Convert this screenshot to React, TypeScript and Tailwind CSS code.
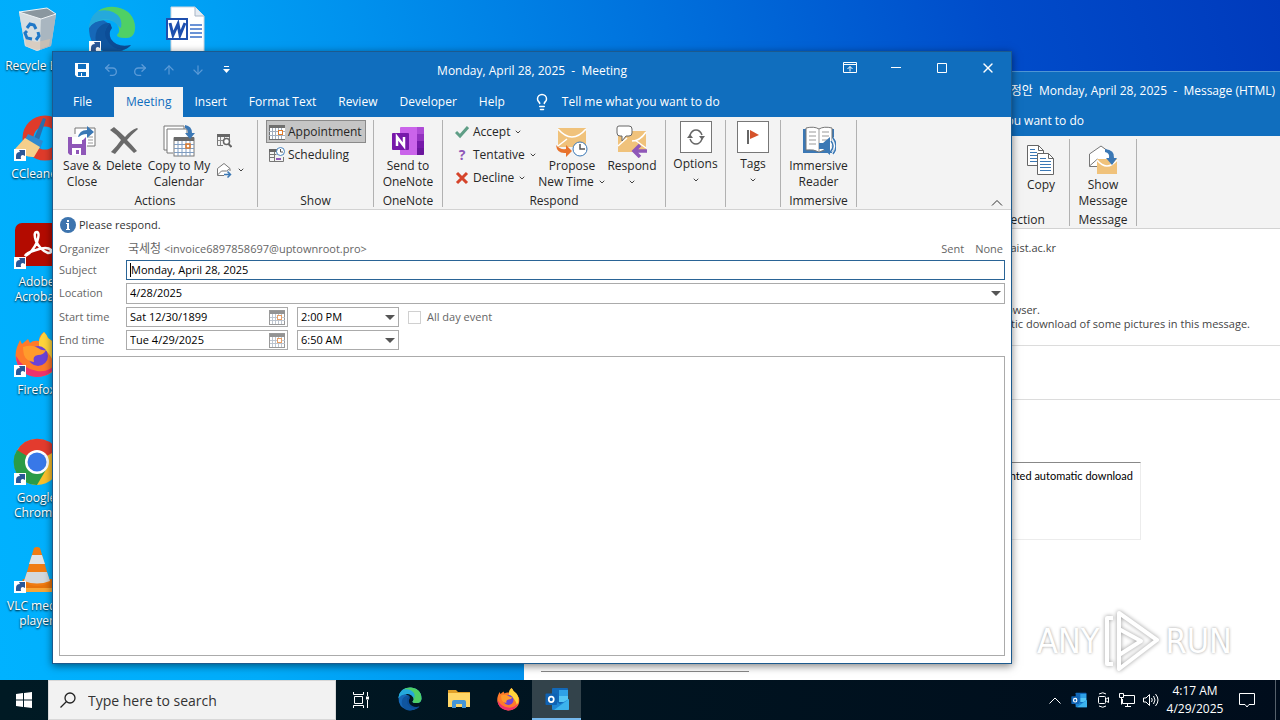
import React from 'react';
import { ChevronDown, Undo2, Redo2, ArrowUp, ArrowDown, X, Lightbulb } from 'lucide-react';

const ShortcutArrow = () => (
  <g>
    <rect x="1" y="35" width="12" height="12" fill="#fff" />
    <path d="M3 45v-3q0-4 4-4l-1-2h6v6l-2-1q-3 0-2 4z" fill="#2b5797" />
  </g>
);

const EdgeArt = () => (
  <g>
    <path d="M1 20Q0 42 20 46q14 2 23-7l-6 2q-12 2-17-8-3-9 3-14L12 12z" fill="#1668b8" />
    <path d="M1 22Q3 2 24 1q15 0 21 12 3 6 2 11-1 8-9 8-9 0-9-3 4-3 2-8-5-8-14-7Q4 15 1 22" fill="#27b4d8" />
    <path d="M10 5Q18 0 27 1q20 3 20 22-1 9-9 9-9 0-9-3 4-4 1-9Q26 9 10 5" fill="#4fd065" />
    <path d="M10 5Q25 2 32 12q2 4 1 10l-3-2q-4-8-15-7-9 2-14 9Q2 10 10 5" fill="#25a9dc" />
    <path d="M22 17q-7 7-5 16 4 10 17 11 6-1 9-5-14 3-20-6-3-6 1-11z" fill="#0c4d97" />
    <path d="M22 17q-7 7-4 15 5 11 17 12-10 5-20 1Q4 37 9 24q5-8 13-7" fill="#0f559f" />
  </g>
);

const FirefoxArt = () => (
  <g>
    <path d="M31 2q3 3 4 6 8 5 11 14 3 13-8 21-14 8-27-1Q-1 32 4 17l3-7 2 4 6-5 2 4q3-3 9-2 0-6 5-9" fill="#ff7a2a" />
    <path d="M31 2q3 3 4 6 8 5 10 14 1 8-3 14-4-14-16-20-1-8 5-14" fill="#ffd43c" />
    <path d="M3 26q1 19 20 21 16 0 22-15-9 11-21 9Q10 39 3 26" fill="#f0326d" />
    <circle cx="25" cy="26" r="10" fill="#6b43d8" />
    <path d="M10 17q9-3 15 1 4 3 8 2-2 5-8 5-6 1-4 7-8-1-10-7-1-5-1-8" fill="#ff9b2c" />
  </g>
);

const ExplorerArt = () => (
  <g>
    <path d="M2 6h16l4 4h24v8H2z" fill="#e0a029" />
    <path d="M2 12h44v28H2z" fill="#ffd667" />
    <path d="M10 42V30q0-4 4-4h20q4 0 4 4v12h-8v-8H18v8z" fill="#4696d6" />
  </g>
);

const OutlookArt = () => (
  <g>
    <rect x="14" y="2" width="32" height="38" rx="2" fill="#1268b8" />
    <rect x="28" y="6" width="18" height="12" fill="#2fa1e6" />
    <rect x="28" y="18" width="18" height="12" fill="#54c6f4" />
    <path d="M14 24l16 10 18-10v20q0 2-2 2H16q-2 0-2-2z" fill="#1d86d4" />
    <path d="M48 24v20q0 2-2 2H18z" fill="#3cb3ec" />
    <rect x="1" y="13" width="23" height="23" rx="2" fill="#0f62b3" />
    <ellipse cx="12.500" cy="24.500" rx="5" ry="5.500" fill="none" stroke="#fff" strokeWidth="3.500" />
  </g>
);

const RecycleArt = () => (
  <g>
    <path d="M6 6l6 34 12 5 14-5 5-32z" fill="#c3ced5" />
    <path d="M6 6l22 7-1 31-3 1-12-5z" fill="#d5dde1" />
    <path d="M28 13l15-5-5 32-11 4z" fill="#a9b6c0" />
    <path d="M6 6l28-4 9 6-15 5z" fill="#8a979f" stroke="#eef3f6" strokeWidth="1" />
    <path d="M12 33l12 3 13-3-1 7-12 4-11-4z" fill="#dcc3ac" opacity=".6" />
    <path d="M14 22l3-4 4 1 2 4M25 26l1 4-3 4M19 33l-5-1-2-5 2-2" fill="none" stroke="#1f78c8" strokeWidth="3" />
  </g>
);

const WordArt = () => (
  <g>
    <path d="M8 1h24l9 9v37H8z" fill="#fff" stroke="#cfd6df" />
    <path d="M32 1v9h9" fill="#e5ebf2" stroke="#a9b5c5" />
    <path d="M27 19h12M27 23h12M27 27h12M27 31h12" stroke="#3a70c9" strokeWidth="1.500" />
    <rect x="4" y="13" width="20" height="20" fill="#fff" stroke="#1e4fae" strokeWidth="2" />
    <path d="M7 17l3 12 5-11 2 11 5-12" fill="none" stroke="#1e4fae" strokeWidth="3" />
  </g>
);

const CCleanerArt = () => (
  <g>
    <circle cx="32" cy="24" r="17" fill="none" stroke="#df3b2b" strokeWidth="11" />
    <path d="M30 4l3 1-7 21-5-2z" fill="#2a6fad" />
    <path d="M15 20l15 7-3 8-16-8z" fill="#2f8ad0" />
    <path d="M12 24l15 9-6 10q-9 1-19-8z" fill="#f5cf8b" />
  </g>
);

const AcrobatArt = () => (
  <g>
    <rect x="2" y="1" width="44" height="43" rx="7" fill="#b30b00" />
    <path d="M12 34q7-3 12-14 3-9 0-10-4 0-1 9 4 9 12 12 4 0 3-3-4-4-15 0-10 3-11 6" fill="none" stroke="#fff" strokeWidth="2.500" />
  </g>
);

const ChromeArt = () => (
  <g>
    <circle cx="24" cy="24" r="23" fill="#fbc02d" />
    <path d="M24 24L4 13a23 23 0 0 1 40-1z" fill="#e33b2e" />
    <path d="M24 24L4 12a23 23 0 0 0 20 35l10-17z" fill="#2a9b47" />
    <circle cx="24" cy="24" r="12" fill="#fff" />
    <circle cx="24" cy="24" r="9.500" fill="#3878e8" />
  </g>
);

const VlcArt = () => (
  <g>
    <path d="M10 33h30l4 13H6z" fill="#e8740c" />
    <path d="M8 42h34v4H8z" fill="#f9a636" />
    <path d="M21 2q3-2 6 0l10 34q-13 8-26 0z" fill="#f07c12" />
    <path d="M19 9h10l3 9H16z" fill="#dfe3e6" />
    <path d="M14 26h20l3 9q-13 5-26 0z" fill="#d3d8dc" />
  </g>
);

interface DesktopIconProps {
  label: string;
  art: React.ReactNode;
  shortcut?: boolean;
}

const DesktopIcon: React.FC<DesktopIconProps> = ({ label, art, shortcut = true }) => (
  <button className="h-[108px] w-[75px] pt-1.5 flex flex-col items-center text-white text-xs leading-[15px]">
    <svg viewBox="0 0 48 48" className="w-12 h-12 shrink-0">
      {art}
      {shortcut && <ShortcutArrow />}
    </svg>
    <span className="w-[66px] mt-1 text-center [text-shadow:0_1px_2px_#000]">{label}</span>
  </button>
);

const desktopColumns = [
  [
    { label: 'Recycle Bin', art: <RecycleArt />, shortcut: false },
    { label: 'CCleaner', art: <CCleanerArt /> },
    { label: 'Adobe Acrobat', art: <AcrobatArt /> },
    { label: 'Firefox', art: <FirefoxArt /> },
    { label: 'Google Chrome', art: <ChromeArt /> },
    { label: 'VLC media player', art: <VlcArt /> },
  ],
  [{ label: '', art: <EdgeArt /> }],
  [{ label: '', art: <WordArt />, shortcut: false }],
];

const SaveCloseIcon = () => (
  <svg viewBox="0 0 32 32" className="w-8 h-8" fill="none">
    <path d="M9 9V3h20v18h-8" fill="#fff" stroke="#777" />
    <path d="M22 12h5M22 15h5M22 18h5" stroke="#999" />
    <path d="M12 13q1-8 9-8V1l7 6-7 6V9q-6 0-9 4" fill="#3b78b5" />
    <path d="M2 12h9v3h6l3-3v18H4l-2-2z" fill="#8f57b8" />
    <path d="M6 12h10v7H6z" fill="#fff" />
    <path d="M6 23h9v7H6z" fill="#fff" />
    <path d="M10 25h3v4h-3z" fill="#8f57b8" />
  </svg>
);

const DeleteIcon = () => (
  <svg viewBox="0 0 32 32" className="w-8 h-8">
    <path d="M2 5l4-3q6 5 11 10Q23 5 29 3l1 1q-7 6-11 11 5 5 10 11l-3 2q-5-5-10-10-4 5-9 11l-4-2q6-6 10-12-5-6-11-10" fill="#6a6a6a" />
  </svg>
);

const CalendarGrid: React.FC<{ className: string }> = ({ className }) => (
  <svg viewBox="0 0 16 16" className={className} shapeRendering="crispEdges">
    <rect x="0" y="1" width="16" height="14" fill="#fff" stroke="#6f6f6f" />
    <rect x="0" y="1" width="16" height="3" fill="#6f6f6f" />
    <path d="M3.500 4v11M6.500 4v11M9.500 4v11M12.500 4v11M0 7.500h16M0 11.500h16" stroke="#a3aebd" />
    <rect x="9" y="6" width="4" height="4" fill="#fff" stroke="#e07a2a" />
  </svg>
);

const CopyCalendarIcon = () => (
  <svg viewBox="0 0 32 32" className="w-8 h-8" fill="none">
    <path d="M5 25H1V1h20v3" fill="#fff" stroke="#777" />
    <path d="M10 28H4V4h20v6" fill="#fff" stroke="#777" />
    <rect x="11" y="13" width="20" height="18" fill="#fff" stroke="#777" />
    <rect x="11" y="12" width="20" height="4" fill="#6a6a6a" />
    <path d="M15 16v15M19 16v15M23 16v15M27 16v15M11 19.500h20M11 23.500h20M11 27.500h20" stroke="#7f9cc0" />
    <path d="M23 19h4v4h-4z" stroke="#e07a2a" strokeWidth="1.500" />
    <path d="M22 0q7 1 7 8h3l-5 6-5-6h3q0-4-3-5z" fill="#3b78b5" />
  </svg>
);

const CalendarSearchIcon = () => (
  <svg viewBox="0 0 16 16" className="w-4 h-4" fill="none">
    <path d="M7 13.500H1.500v-11h12V8" stroke="#777" />
    <path d="M1 2h13v3H1z" fill="#666" />
    <path d="M4.500 5v8M8.500 5v3M2 8.500h5" stroke="#888" />
    <circle cx="10.500" cy="9.500" r="3" fill="#fff" stroke="#666" strokeWidth="1.500" />
    <path d="M12.500 12l3 3" stroke="#666" strokeWidth="2" />
  </svg>
);

const ForwardIcon = () => (
  <svg viewBox="0 0 16 16" className="w-4 h-4" fill="none">
    <path d="M8 13.500H1.500v-7L8 1.500l6 5V9" fill="#fff" stroke="#777" />
    <path d="M1.500 13l4-4h5l3-2" stroke="#777" />
    <path d="M8 12.500h6M11.500 9.500l3 3-3 3" stroke="#3b78b5" strokeWidth="1.500" />
  </svg>
);

const SchedulingIcon = () => (
  <svg viewBox="0 0 16 16" className="w-4 h-4" fill="none">
    <path d="M.5 2.500h8M.5 2v12.500h14V10M5.500 4v10M.5 7.500h7M.5 10.500h5" stroke="#777" />
    <path d="M0 2h8v3H0z" fill="#666" />
    <path d="M7 12h5" stroke="#8f57b8" strokeWidth="2" />
    <circle cx="11.500" cy="4.500" r="4" fill="#fff" stroke="#4682bd" />
    <path d="M11.500 2v3H14" stroke="#555" />
  </svg>
);

const OneNoteIcon = () => (
  <svg viewBox="0 0 32 32" className="w-8 h-8">
    <rect x="8" y="2" width="24" height="28" rx="1" fill="#ca64ea" />
    <path d="M25 2h6q1 0 1 1v6h-7z" fill="#ae4bd5" />
    <path d="M25 9h7v7h-7z" fill="#9332bf" />
    <path d="M25 16h7v7h-7z" fill="#7719aa" />
    <path d="M25 23h7v6q0 1-1 1h-6z" fill="#6a169c" />
    <rect x="0" y="8" width="17" height="17" rx="1" fill="#7719aa" />
    <path d="M5 21v-9l7 9v-9" fill="none" stroke="#fff" strokeWidth="2.500" />
  </svg>
);

const ProposeIcon = () => (
  <svg viewBox="0 0 34 32" className="w-[34px] h-8" fill="none">
    <path d="M3 3h28v19H3z" fill="#f0c27b" />
    <path d="M3 4q14 16 28 0M3 21l9-7" stroke="#fff" strokeWidth="1.500" />
    <path d="M1 20q4 5 10 4v-4l6 6-6 6v-4Q2 29 1 20" fill="#e8722c" />
    <circle cx="25" cy="24" r="7" fill="#fff" stroke="#3b78b5" />
    <path d="M25 19v5h5" stroke="#555" strokeWidth="1.500" />
  </svg>
);

const RespondIcon = () => (
  <svg viewBox="0 0 34 34" className="w-[34px] h-[34px]" fill="none">
    <path d="M3 7h28v21H3z" fill="#f0c27b" />
    <path d="M3 22L12 14M31 8q-6 9-14 9M20 16l11 8" stroke="#fff" strokeWidth="1.500" />
    <path d="M4 2h10q3 0 3 3v4q0 3-3 3h-3l-4 5v-5H5q-3 0-3-3V4q0-2 2-2" fill="#fff" stroke="#666" />
    <path d="M32 27H20M25 21l-6 6 6 6" stroke="#8f57b8" strokeWidth="3.500" />
  </svg>
);

const OptionsIcon = () => (
  <svg viewBox="0 0 20 20" className="w-5 h-5" fill="none">
    <path d="M4 8q2-5 6-5 4 0 6 5M16 12q-2 5-6 5-4 0-6-5" stroke="#666" strokeWidth="1.500" />
    <path d="M1 11l3-4 3 4zM13 9l3 4 3-4z" fill="#666" />
  </svg>
);

const FlagIcon = () => (
  <svg viewBox="0 0 20 20" className="w-5 h-5">
    <path d="M4 3h2v14H4z" fill="#666" />
    <path d="M7 3l9 5-9 4z" fill="#d5522a" />
  </svg>
);

const ReaderIcon = () => (
  <svg viewBox="0 0 34 30" className="w-[34px] h-[30px]" fill="none">
    <path d="M1 3h31v24H1z" fill="#3b78b5" />
    <path d="M4 2q8-2 13 1 5-3 13-1v22q-8-1-13 2-5-3-13-2z" fill="#fff" stroke="#777" />
    <path d="M17 3v22M7 6h7M7 10h7M7 14h7M7 18h7M20 6h7M20 10h7M20 14h5" stroke="#999" />
    <path d="M17 17h4l7-6v18l-7-6h-4z" fill="#3b78b5" />
    <path d="M29 15q4 5 0 10M31 12q6 8 0 16" stroke="#fff" strokeWidth="3" />
    <path d="M29 15q4 5 0 10M31 12q6 8 0 16" stroke="#3b78b5" strokeWidth="1.500" />
  </svg>
);

const CopyPagesIcon = () => (
  <svg viewBox="0 0 30 32" className="w-[30px] h-8" fill="none">
    <path d="M1.500 1.500h11l5 5v15h-16z" fill="#fff" stroke="#666" />
    <path d="M4 5.500h5M4 8.500h7M4 11.500h7M4 14.500h7M4 17.500h7" stroke="#3b78b5" />
    <path d="M11.500 9.500h11l5 5v16h-16z" fill="#fff" stroke="#666" />
    <path d="M12.500 1.500v5h5M22.500 9.500v5h5" stroke="#666" />
    <path d="M14 14.500h6M14 17.500h11M14 20.500h11M14 23.500h11M14 26.500h11" stroke="#3b78b5" />
  </svg>
);

const ShowMessageIcon = () => (
  <svg viewBox="0 0 30 32" className="w-[30px] h-8" fill="none">
    <path d="M9 22.500H1.500V10L13 2l11 8v6" fill="#fff" stroke="#777" />
    <path d="M1.500 22l8-7" stroke="#777" />
    <path d="M9 15h20v15H9z" fill="#f0c27b" />
    <path d="M9 16q10 12 20 0" stroke="#fff" strokeWidth="1.500" />
    <path d="M17 5q10 1 9 9h3l-5 7-6-7h3q1-5-4-6z" fill="#3b78b5" />
  </svg>
);

const MenuArrow = () => <ChevronDown className="w-2 h-2 text-[#444]" strokeWidth={3} />;

interface BigButtonProps {
  icon: React.ReactNode;
  lines: string[];
  className?: string;
  menu?: boolean;
}

const BigButton: React.FC<BigButtonProps> = ({ icon, lines, className = '', menu }) => (
  <button className={`flex flex-col items-center pt-[3px] leading-4 whitespace-nowrap ${className}`}>
    <span className="h-[35px] flex items-center">{icon}</span>
    {lines.map((line, i) => (
      <span key={line} className="flex items-center gap-1">
        {line}
        {menu && i === 1 && <MenuArrow />}
      </span>
    ))}
    {menu && lines.length === 1 && <span className="mt-1"><MenuArrow /></span>}
  </button>
);

const BoxedButton: React.FC<{ icon: React.ReactNode; label: string }> = ({ icon, label }) => (
  <button className="flex-1 flex flex-col items-center pt-px leading-4">
    <span className="w-8 h-8 bg-white border border-[#777] flex items-center justify-center">{icon}</span>
    <span className="mt-[3px] mb-1">{label}</span>
    <MenuArrow />
  </button>
);

interface RibbonGroupProps {
  label?: string;
  className: string;
  children: React.ReactNode;
}

const RibbonGroup: React.FC<RibbonGroupProps> = ({ label, className, children }) => (
  <div className={`h-[87px] shrink-0 border-r border-[#b1b1b1] flex flex-col ${className}`}>
    <div className="flex-1 flex min-h-0">{children}</div>
    {label && <div className="h-3 leading-3 text-center">{label}</div>}
  </div>
);

const SmallButton: React.FC<{ icon: React.ReactNode; label: string }> = ({ icon, label }) => (
  <button className="h-[23px] flex items-center gap-1 whitespace-nowrap">
    <span className="w-[14px] flex justify-center">{icon}</span>
    <span>{label}</span>
    <MenuArrow />
  </button>
);

const tabs = ['Insert', 'Format Text', 'Review', 'Developer', 'Help'];

const TitleBar = () => (
  <div className="h-[35px] flex items-start">
    <div className="flex-1">
      <div className="h-[35px] pl-[14px] flex items-center text-[#5b9bd8]">
        <button aria-label="Save" className="w-[29px] flex justify-center">
          <svg viewBox="0 0 14 14" className="w-[14px] h-[14px]">
            <path d="M0 0h14v14H2l-2-2z" fill="#fff" />
            <path d="M3 1h8v5H3zM3 9h8v4H7v-3H6v3H3z" fill="#106ebe" />
          </svg>
        </button>
        <button aria-label="Undo" className="w-[29px] flex justify-center"><Undo2 className="w-4 h-4" /></button>
        <button aria-label="Redo" className="w-[29px] flex justify-center"><Redo2 className="w-4 h-4" /></button>
        <button aria-label="Previous item" className="w-[29px] flex justify-center"><ArrowUp className="w-[14px] h-[14px]" /></button>
        <button aria-label="Next item" className="w-[29px] flex justify-center"><ArrowDown className="w-[14px] h-[14px]" /></button>
        <button aria-label="Customize toolbar" className="w-[29px] flex justify-center">
          <svg viewBox="0 0 7 7" className="w-[7px] h-[7px]"><path d="M1 0h5v1H1zM0 3h7L3.500 7z" fill="#fff" /></svg>
        </button>
      </div>
    </div>
    <h1 className="h-[35px] leading-[38px] whitespace-pre">{'Monday, April 28, 2025  -  Meeting'}</h1>
    <div className="flex-1 flex justify-end h-8 items-center">
      <button aria-label="Ribbon display options" className="w-[46px] flex justify-center">
        <svg viewBox="0 0 14 12" className="w-[14px] h-3" fill="none" stroke="#fff"><path d="M.5.500h13v10H.5zM.5 2.500h13M7 9.500V4.500M4.500 7L7 4.500 9.500 7" /></svg>
      </button>
      <button aria-label="Minimize" className="w-[46px] flex justify-center">
        <svg viewBox="0 0 10 10" className="w-[10px] h-[10px]"><path d="M0 4h10v1H0z" fill="#fff" /></svg>
      </button>
      <button aria-label="Maximize" className="w-[46px] flex justify-center">
        <svg viewBox="0 0 10 10" className="w-[10px] h-[10px]" fill="none" stroke="#fff"><path d="M.5.500h9v9h-9z" /></svg>
      </button>
      <button aria-label="Close" className="w-[46px] flex justify-center"><X className="w-4 h-4" strokeWidth={2} /></button>
    </div>
  </div>
);

const TabRow = () => (
  <nav className="h-[30px] flex items-stretch">
    <button className="pl-5 pr-[22px]">File</button>
    <button className="px-3 bg-[#f3f3f3] text-[#106ebe]">Meeting</button>
    {tabs.map((tab) => (
      <button key={tab} className="px-[11px]">{tab}</button>
    ))}
    <button className="flex items-center pl-[17px] gap-[11px]">
      <Lightbulb className="w-[18px] h-[18px]" strokeWidth={2} />
      Tell me what you want to do
    </button>
  </nav>
);

const Ribbon = () => (
  <div className="h-[93px] pt-[3px] bg-[#f3f3f3] border-b border-[#d2d2d2] text-[#262626] flex">
    <RibbonGroup label="Actions" className="w-[205px]">
      <BigButton className="w-[42px] ml-2" icon={<SaveCloseIcon />} lines={['Save &', 'Close']} />
      <BigButton className="w-[42px]" icon={<DeleteIcon />} lines={['Delete']} />
      <BigButton className="w-[68px]" icon={<CopyCalendarIcon />} lines={['Copy to My', 'Calendar']} />
      <div className="flex flex-col pl-[3px] pt-3 gap-[14px]">
        <button aria-label="Calendar preview"><CalendarSearchIcon /></button>
        <button aria-label="Forward" className="flex items-center gap-[5px]">
          <ForwardIcon />
          <MenuArrow />
        </button>
      </div>
    </RibbonGroup>
    <RibbonGroup label="Show" className="w-[116px]">
      <div className="flex flex-col pl-2 w-[108px]">
        <button className="h-[23px] w-full border border-[#8a8a8a] bg-[#c5c5c5] flex items-center gap-[3px] pl-0.5">
          <CalendarGrid className="w-4 h-4" />
          Appointment
        </button>
        <button className="h-[23px] flex items-center gap-[3px] pl-[3px]">
          <SchedulingIcon />
          Scheduling
        </button>
      </div>
    </RibbonGroup>
    <RibbonGroup label="OneNote" className="w-[69px]">
      <BigButton className="w-full" icon={<OneNoteIcon />} lines={['Send to', 'OneNote']} />
    </RibbonGroup>
    <RibbonGroup label="Respond" className="w-[223px]">
      <div className="flex flex-col w-[94px] pl-3">
        <SmallButton
          label="Accept"
          icon={<svg viewBox="0 0 14 14" className="w-[14px] h-[14px]" fill="none"><path d="M1 7l4 4 8-9" stroke="#5f9e86" strokeWidth="3" /></svg>}
        />
        <SmallButton label="Tentative" icon={<span className="font-bold text-sm text-[#8f57b8]">?</span>} />
        <SmallButton
          label="Decline"
          icon={<svg viewBox="0 0 14 14" className="w-[14px] h-[14px]" fill="none"><path d="M2 2l10 10M12 2L2 12" stroke="#d5442a" strokeWidth="3" /></svg>}
        />
      </div>
      <BigButton className="w-[70px]" icon={<ProposeIcon />} lines={['Propose', 'New Time']} menu />
      <BigButton className="w-[50px]" icon={<RespondIcon />} lines={['Respond']} menu />
    </RibbonGroup>
    <RibbonGroup className="w-[60px]">
      <BoxedButton icon={<OptionsIcon />} label="Options" />
    </RibbonGroup>
    <RibbonGroup className="w-[55px]">
      <BoxedButton icon={<FlagIcon />} label="Tags" />
    </RibbonGroup>
    <RibbonGroup label="Immersive" className="w-[76px]">
      <BigButton className="w-full" icon={<ReaderIcon />} lines={['Immersive', 'Reader']} />
    </RibbonGroup>
    <button aria-label="Collapse ribbon" className="ml-auto mt-auto mr-2 mb-[3px]">
      <svg viewBox="0 0 12 6" className="w-3 h-1.5" fill="none" stroke="#333"><path d="M1 5.500l5-5 5 5" /></svg>
    </button>
  </div>
);

const DownTriangle = () => (
  <svg viewBox="0 0 10 5" className="w-[10px] h-[5px] shrink-0 pointer-events-none"><path d="M0 0h10L5 5z" fill="#555" /></svg>
);

interface TimeRowProps {
  id: string;
  label: string;
  date: string;
  time: string;
  children?: React.ReactNode;
}

const TimeRow: React.FC<TimeRowProps> = ({ id, label, date, time, children }) => (
  <div className="flex items-center h-5">
    <label htmlFor={id} className="w-[67px]">{label}</label>
    <div className="w-[162px] h-5 border border-[#ababab] flex items-center pl-[3px] pr-0.5">
      <input id={id} defaultValue={date} className="flex-1 min-w-0 text-black outline-none" />
      <button aria-label={`Pick ${label.toLowerCase()} date`}><CalendarGrid className="w-4 h-[15px] opacity-75" /></button>
    </div>
    <div className="w-[102px] h-5 ml-[9px] border border-[#ababab] flex items-center pl-[3px] pr-[3px]">
      <select aria-label={`${label} hour`} defaultValue={time} className="flex-1 appearance-none text-black outline-none">
        <option>{time}</option>
      </select>
      <DownTriangle />
    </div>
    {children}
  </div>
);

const MeetingForm = () => (
  <div className="flex-1 min-h-0 bg-white flex flex-col px-1.5 pb-[7px] text-[11px] text-[#666]">
    <div className="h-[30px] flex items-center gap-[3px] text-[#333]">
      <svg viewBox="0 0 16 16" className="w-4 h-4 ml-px">
        <circle cx="8" cy="8" r="8" fill="#3d74ae" />
        <path d="M7 3h2v2H7zM6 6h3v6h1v1H6v-1h1V7H6z" fill="#fff" />
      </svg>
      Please respond.
    </div>
    <div className="h-[18px] mb-0.5 flex items-center">
      <span className="w-[67px]">Organizer</span>
      <span className="pl-0.5 leading-4"><span className="text-xs">국세청</span> &lt;invoice6897858697@uptownroot.pro&gt;</span>
      <span className="ml-auto mr-[11px]">Sent</span>
      <span className="mr-0.5">None</span>
    </div>
    <div className="flex flex-col gap-[3px]">
      <div className="flex items-center h-5">
        <label htmlFor="subject" className="w-[67px]">Subject</label>
        <div className="flex-1 h-5 border border-[#2a6496] flex items-center pl-[3px]">
          <span className="w-px h-[14px] bg-black" />
          <input id="subject" defaultValue="Monday, April 28, 2025" className="flex-1 text-black outline-none" />
        </div>
      </div>
      <div className="flex items-center h-[21px]">
        <label htmlFor="location" className="w-[67px]">Location</label>
        <div className="flex-1 h-[21px] border border-[#ababab] flex items-center pl-[3px] pr-[3px]">
          <input id="location" defaultValue="4/28/2025" className="flex-1 text-black outline-none" />
          <button aria-label="Recent locations"><DownTriangle /></button>
        </div>
      </div>
      <TimeRow id="start" label="Start time" date="Sat 12/30/1899" time="2:00 PM">
        <label className="ml-[9px] flex items-center gap-1.5">
          <input type="checkbox" className="appearance-none w-[13px] h-[13px] border border-[#d0d0d0] bg-white" />
          All day event
        </label>
      </TimeRow>
      <TimeRow id="end" label="End time" date="Tue 4/29/2025" time="6:50 AM" />
    </div>
    <textarea aria-label="Meeting notes" className="flex-1 mt-1.5 border border-[#ababab] resize-none outline-none" />
  </div>
);

const MeetingWindow = () => (
  <section className="absolute left-[53px] right-[269px] top-[52px] bottom-[17px] flex flex-col bg-[#106ebe] text-white text-xs outline outline-[#1c5a8e] shadow-[0_2px_8px_1px_rgba(0,0,0,0.5)]">
    <TitleBar />
    <TabRow />
    <Ribbon />
    <MeetingForm />
  </section>
);

const MessageWindow = () => (
  <section className="absolute left-[524px] right-0 top-[71px] bottom-0 flex flex-col bg-white text-xs text-right overflow-hidden">
    <div className="bg-[#106ebe] border-t border-[#4f95d4] text-white">
      <div className="h-[35px] leading-[37px] pr-[5px] whitespace-pre">수정안  Monday, April 28, 2025  -  Message (HTML)</div>
      <div className="h-[29px] leading-[28px] pr-[196px]">Tell me what you want to do</div>
    </div>
    <div className="h-[93px] pt-[3px] bg-[#f3f3f3] border-b border-[#d2d2d2] text-[#262626] flex justify-end pr-[143px]">
      <RibbonGroup label="Selection" className="w-[100px]">
        <BigButton className="w-[44px]" icon={null} lines={['Select', 'All']} />
        <BigButton className="w-[54px]" icon={<CopyPagesIcon />} lines={['Copy']} />
      </RibbonGroup>
      <RibbonGroup label="Message" className="w-[67px]">
        <BigButton className="w-full" icon={<ShowMessageIcon />} lines={['Show', 'Message']} />
      </RibbonGroup>
    </div>
    <div className="h-[117px] border-b border-[#dcdcdc] text-[11px] leading-[14px] text-[#444] pt-3">
      <p className="pr-[224px]">kaist.ac.kr</p>
      <p className="pr-[240px] mt-12">view it in a web browser.</p>
      <p className="pr-[30px]">prevented automatic download of some pictures in this message.</p>
    </div>
    <div className="h-[54px] border-b border-[#dcdcdc]" />
    <div className="mt-[62px] ml-4 mr-[139px] h-[78px] pt-1.5 pr-[7px] border border-t-[#888] border-[#ececec] text-[11px] leading-[14px] text-black font-['Lato',sans-serif]">
      prevented automatic download
    </div>
    <div className="mt-auto mb-2 ml-[17px] w-[208px] border-t border-[#888]" />
  </section>
);

const Watermark = () => (
  <div className="absolute right-12 bottom-[7px] h-16 flex items-center gap-1 text-white font-['DejaVu_Sans_Condensed','Roboto',sans-serif] text-[34px] [text-shadow:0_0_3px_#999]">
    <span>ANY</span>
    <svg viewBox="0 0 58 64" className="w-[58px] h-16 drop-shadow-[0_0_2px_#999]" fill="none" stroke="#fff" strokeWidth="4" strokeLinejoin="round">
      <path d="M16 4l38 27-38 29z" />
      <path d="M10 9H4v46h6M16 20l22 12-22 14" />
    </svg>
    <span>RUN</span>
  </div>
);

const apps = [
  { name: 'Microsoft Edge', art: <EdgeArt />, active: false },
  { name: 'File Explorer', art: <ExplorerArt />, active: false },
  { name: 'Firefox', art: <FirefoxArt />, active: false },
  { name: 'Outlook', art: <OutlookArt />, active: true },
];

const Taskbar = () => (
  <footer className="h-10 flex items-stretch bg-gradient-to-r from-[#001a24] to-[#000d1c] text-white text-xs">
    <button aria-label="Start" className="w-12 flex items-center justify-center">
      <svg viewBox="0 0 16 16" className="w-4 h-4"><path d="M0 2l7-1v6.500H0zM8 1l8-1v7.500H8zM0 8.500h7V15l-7-1zM8 8.500h8V16l-8-1z" fill="#fff" /></svg>
    </button>
    <label className="w-[288px] bg-[#f2f2f2] border border-[#d8d8d8] flex items-center pl-[11px] gap-3 text-[#333]">
      <svg viewBox="0 0 16 16" className="w-4 h-4" fill="none" stroke="#222" strokeWidth="1.300"><circle cx="10" cy="6" r="5" /><path d="M6.500 9.500L.5 15.500" /></svg>
      <input type="text" aria-label="Search" placeholder="Type here to search" className="flex-1 min-w-0 pt-0.5 text-sm outline-none placeholder:text-[#333]" />
    </label>
    <button aria-label="Task view" className="w-[49px] flex items-center justify-center">
      <svg viewBox="0 0 16 16" className="w-4 h-4" fill="none" stroke="#fff"><path d="M.5 0v2.500h10V0M.5 16v-2.500h10V16M1.500 4.500h8v7h-8zM14.500 0v4M14.500 8v8" /><path d="M13 4.500h3v3h-3z" fill="#fff" stroke="none" /></svg>
    </button>
    {apps.map((app) => (
      <button
        key={app.name}
        aria-label={app.name}
        className={`w-[49px] flex items-center justify-center border-b-2 ${app.active ? 'bg-[#33434b] border-[#76b9ed]' : 'border-transparent'}`}
      >
        <svg viewBox="0 0 48 48" className="w-6 h-6">{app.art}</svg>
      </button>
    ))}
    <div className="ml-auto flex items-center">
      <button aria-label="Show hidden icons" className="w-6 flex justify-center">
        <svg viewBox="0 0 12 7" className="w-3 h-[7px]" fill="none" stroke="#fff"><path d="M.5 6.500L6 1l5.500 5.500" /></svg>
      </button>
      <button aria-label="Outlook" className="w-6 flex justify-center"><svg viewBox="0 0 48 48" className="w-4 h-4"><OutlookArt /></svg></button>
      <button aria-label="Meet now" className="w-6 flex justify-center">
        <svg viewBox="0 0 16 16" className="w-4 h-4" fill="none" stroke="#fff"><rect x="3.500" y="4.500" width="7" height="7" rx="1" /><path d="M10.500 7.500l3-2v5l-3-2M4 2q4-2.500 7 0M4 14q4 2.500 7 0" /></svg>
      </button>
      <button aria-label="Network" className="w-6 flex justify-center">
        <svg viewBox="0 0 16 16" className="w-4 h-4" fill="none" stroke="#fff"><path d="M5 3.500h10.500v8H3.500V7M8.500 11.500v3M6 14.500h6M.5 1.500h4v4h-4zM2.500 5.500v7" /></svg>
      </button>
      <button aria-label="Volume" className="w-6 flex justify-center">
        <svg viewBox="0 0 16 16" className="w-4 h-4" fill="none" stroke="#fff"><path d="M.5 6H3l3.500-3.500v11L3 10H.5zM8.500 6q1.500 2 0 4M10.500 4q3 4 0 8M12.500 2q5 6 0 12" /></svg>
      </button>
      <div className="w-16 text-center leading-[18px] whitespace-nowrap">
        <div>4:17 AM</div>
        <div>4/29/2025</div>
      </div>
      <button aria-label="Notifications" className="w-10 flex justify-center">
        <svg viewBox="0 0 16 16" className="w-4 h-4" fill="none" stroke="#fff"><path d="M.5 1.500h15v11H10L8 15l-2-2.500H.5z" /></svg>
      </button>
      <div className="w-[13px] h-10 flex justify-end pr-1"><span className="w-px h-full bg-[#56616b]" /></div>
    </div>
  </footer>
);

const App = () => (
  <div className="h-screen flex flex-col overflow-hidden font-['Open_Sans','Noto_Sans_CJK_KR',sans-serif]">
    <main className="relative flex-1 min-h-0 overflow-hidden bg-[linear-gradient(75deg,#00b2ff_0%,#00acfa_18%,#0092ee_36%,#0074de_55%,#004cca_80%,#003abc_100%)]">
      <div className="flex -ml-px">
        {desktopColumns.map((column, i) => (
          <div key={i} className="flex flex-col">
            {column.map((icon) => (
              <DesktopIcon key={icon.label} {...icon} />
            ))}
          </div>
        ))}
      </div>
      <MessageWindow />
      <MeetingWindow />
      <Watermark />
    </main>
    <Taskbar />
  </div>
);

export default App;
